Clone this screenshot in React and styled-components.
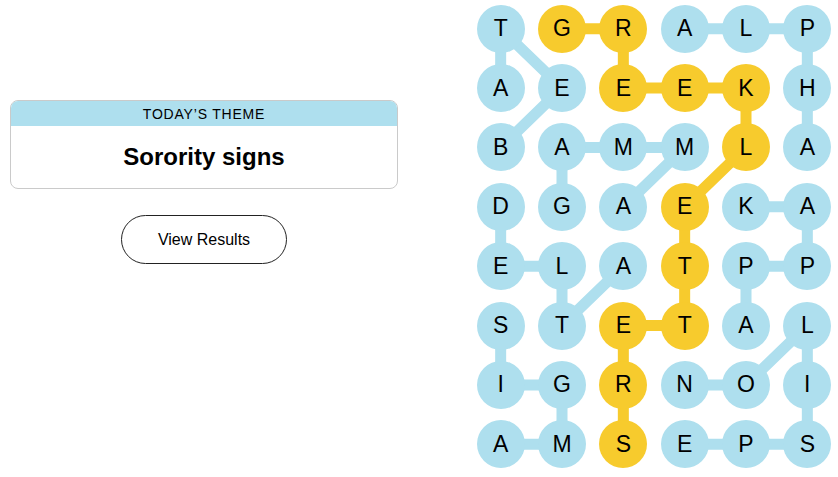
import styled, { createGlobalStyle } from 'styled-components';

const GlobalStyle = createGlobalStyle`
  body {
    margin: 0;
    background: #fff;
    font-family: "Liberation Sans", Arial, sans-serif;
    color: #000;
  }
`;

const BLUE = '#aedfee';
const YELLOW = '#f7cb2d';

const COL_W = 368 / 6;
const ROW_H = 475 / 8;

const letters = [
  'TGRALP',
  'AEEEKH',
  'BAMMLA',
  'DGAEKA',
  'ELATPP',
  'STETAL',
  'IGRNOI',
  'AMSEPS',
];

// spangram path, [row, col]
const spangram = [
  [0, 1], [0, 2], [1, 2], [1, 3], [1, 4], [2, 4],
  [3, 3], [4, 3], [5, 3], [5, 2], [6, 2], [7, 2],
];

const themeWords = [
  [[2, 0], [1, 1], [0, 0], [1, 0]], // BETA
  [[0, 3], [0, 4], [0, 5], [1, 5], [2, 5]], // ALPHA
  [[3, 1], [2, 1], [2, 2], [2, 3], [3, 2]], // GAMMA
  [[3, 4], [3, 5], [4, 5], [4, 4], [5, 4]], // KAPPA
  [[3, 0], [4, 0], [4, 1], [5, 1], [4, 2]], // DELTA
  [[5, 0], [6, 0], [6, 1], [7, 1], [7, 0]], // SIGMA
  [[7, 3], [7, 4], [7, 5], [6, 5], [5, 5], [6, 4], [6, 3]], // EPSILON
];

const isSpangram = (r, c) => spangram.some(([sr, sc]) => sr === r && sc === c);

const Page = styled.div`
  display: flex;
  justify-content: space-between;
  align-items: flex-start;
`;

const Side = styled.div`
  width: 388px;
  margin-left: 10px;
  padding-top: 100px;
  display: flex;
  flex-direction: column;
  align-items: center;
  gap: 26px;
`;

const ThemeCard = styled.div`
  width: 100%;
  box-sizing: border-box;
  border: 1px solid #cacaca;
  border-radius: 8px;
  overflow: hidden;
`;

const ThemeLabel = styled.div`
  height: 25px;
  background: ${BLUE};
  display: flex;
  align-items: center;
  justify-content: center;
  font-size: 14px;
  letter-spacing: 0.8px;
  text-transform: uppercase;
`;

const ThemeTitle = styled.h1`
  margin: 0;
  height: 62px;
  display: flex;
  align-items: center;
  justify-content: center;
  font-size: 24px;
  font-weight: 700;
`;

const ResultsButton = styled.button`
  width: 166px;
  height: 49px;
  border: 1px solid #222;
  border-radius: 999px;
  background: #fff;
  font-family: inherit;
  font-size: 16px;
  color: #000;
  cursor: pointer;
`;

const Board = styled.div`
  position: relative;
  width: 368px;
  height: 475px;
  margin-top: -1px;
  display: grid;
  grid-template-columns: repeat(6, 1fr);
  grid-template-rows: repeat(8, 1fr);
`;

const Links = styled.svg`
  position: absolute;
  inset: 0;
  z-index: 0;
`;

const Cell = styled.div`
  display: flex;
  align-items: center;
  justify-content: center;
  z-index: 1;
`;

const Letter = styled.div`
  width: 48px;
  height: 48px;
  border-radius: 50%;
  background: ${({ $found }) => ($found ? YELLOW : BLUE)};
  display: flex;
  align-items: center;
  justify-content: center;
  font-size: 23px;
  line-height: 1;
  color: #000;
`;

const cx = (c) => COL_W / 2 + c * COL_W;
const cy = (r) => ROW_H / 2 + r * ROW_H;

const toPoints = (path) => path.map(([r, c]) => `${cx(c)},${cy(r)}`).join(' ');

const App = () => (
  <>
    <GlobalStyle />
    <Page>
      <Side>
        <ThemeCard>
          <ThemeLabel>Today’s Theme</ThemeLabel>
          <ThemeTitle>Sorority signs</ThemeTitle>
        </ThemeCard>
        <ResultsButton>View Results</ResultsButton>
      </Side>
      <Board>
        <Links width="368" height="475" viewBox="0 0 368 475">
          {themeWords.map((w, i) => (
            <polyline key={i} points={toPoints(w)} fill="none" stroke={BLUE} strokeWidth="11" />
          ))}
          <polyline points={toPoints(spangram)} fill="none" stroke={YELLOW} strokeWidth="11" />
        </Links>
        {letters.map((row, r) =>
          row.split('').map((ch, c) => (
            <Cell key={`${r}-${c}`}>
              <Letter $found={isSpangram(r, c)}>{ch}</Letter>
            </Cell>
          ))
        )}
      </Board>
    </Page>
  </>
);

export default App;
